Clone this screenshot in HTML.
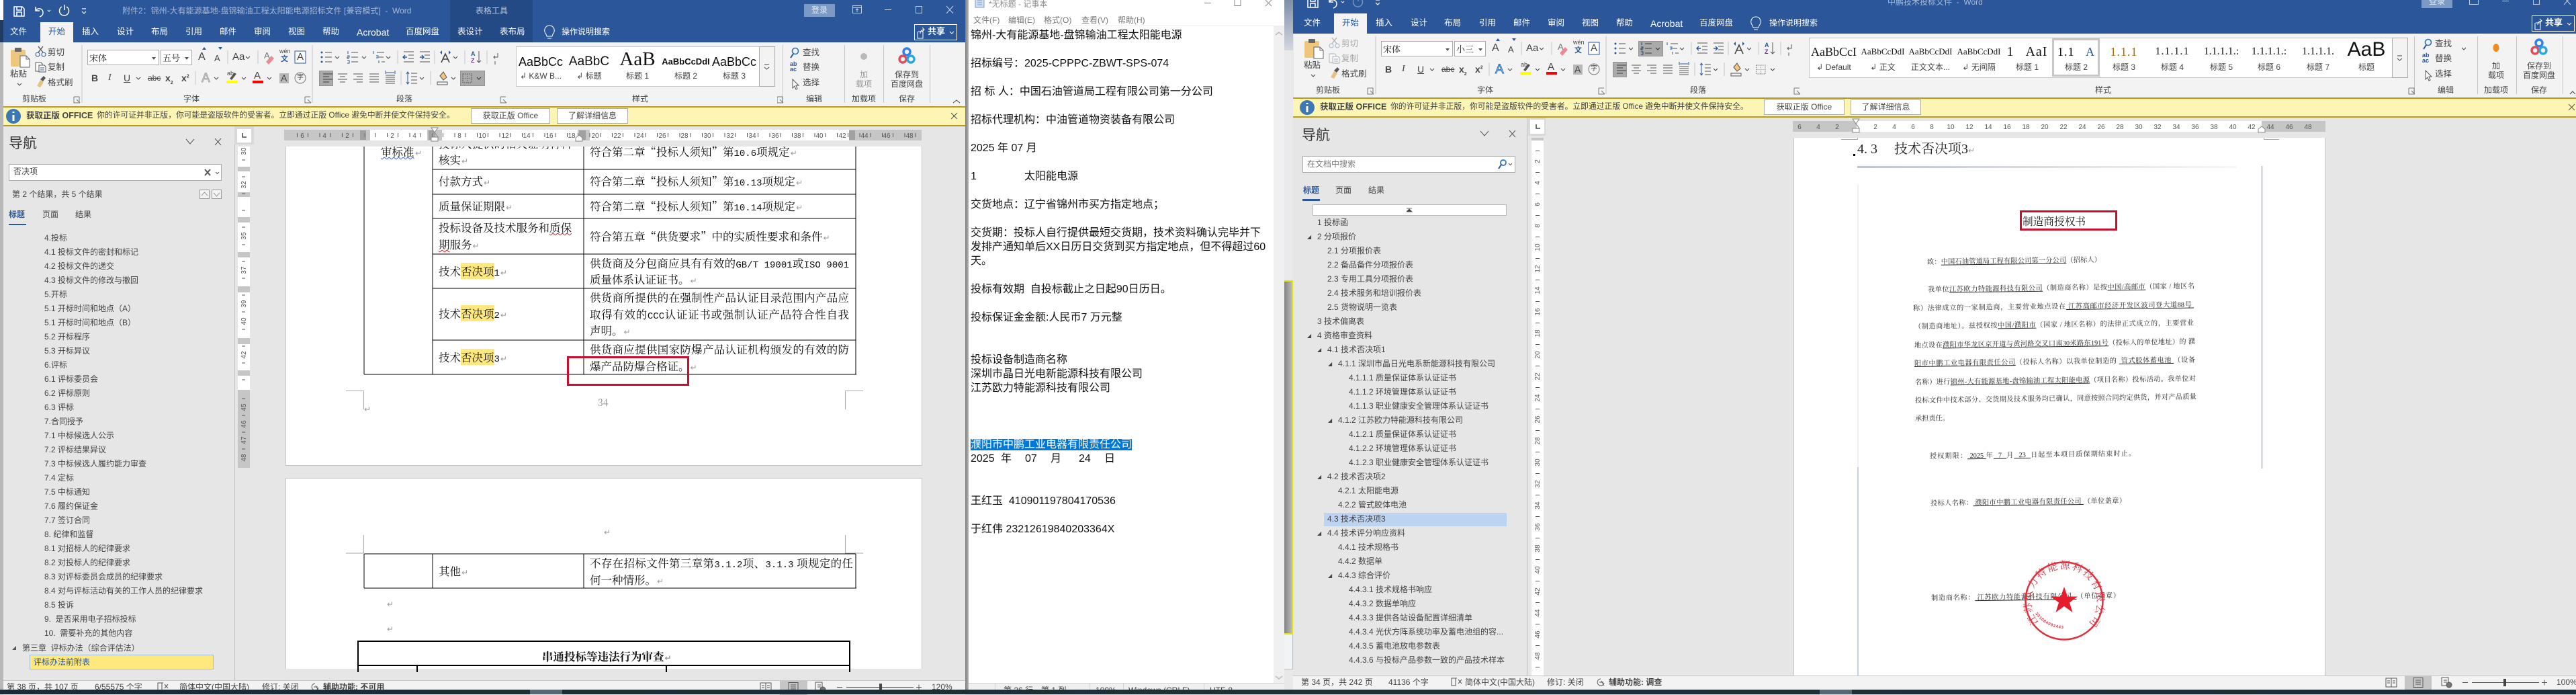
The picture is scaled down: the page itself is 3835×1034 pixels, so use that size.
<!DOCTYPE html>
<html lang="zh"><head><meta charset="utf-8"><title>Word</title>
<style>
html,body{margin:0;padding:0}
body{width:3835px;height:1033px;overflow:hidden;position:relative;background:#e6e6e6;font-family:"Liberation Sans","Noto Sans CJK SC",sans-serif}
.a{position:absolute}
.t{position:absolute;white-space:nowrap;line-height:1;font-size:12px;color:#444}
.w{position:absolute;overflow:hidden;background:#e6e6e6}
.tb{color:#fff;font-size:12.5px;top:41px}
.tit{color:#a4b9d8;font-size:12px;top:10px}
.lb{color:#444;top:141px}
.btn{position:absolute;background:#fff;border:1px solid #ababab;box-sizing:border-box;font-size:12px;color:#444;text-align:center;line-height:20px}
.ibar{position:absolute;background:#fcf5b4;border-top:2px solid #b99a1a;border-bottom:2px solid #b99a1a;box-sizing:border-box;height:30px}
.sty{position:absolute;top:0;text-align:center;white-space:nowrap;transform:translateX(-50%);line-height:1}
.n{position:absolute;font-size:12px;color:#444;line-height:21px;white-space:nowrap}
.n div{height:21px;position:relative}
.n s{position:absolute;margin-left:-15px;font-size:8px;text-decoration:none;color:#444;font-family:"DejaVu Sans",sans-serif}
.d{position:absolute;white-space:nowrap;font-family:"Noto Serif CJK SC","Liberation Serif",serif;font-size:16.5px;line-height:20px;height:20px;color:#111}
.j{text-align:justify;text-align-last:justify;white-space:normal;width:386px}
.d i{font-style:normal;color:#9a9a9a;font-family:"DejaVu Sans",sans-serif;font-size:12px;margin-left:1px}
.d b{font-family:"Liberation Mono",monospace;font-size:14px;font-weight:400}
.h{background:#ffe97f}
.sc{position:absolute;white-space:normal;overflow:hidden;font-family:"Liberation Serif","Noto Serif CJK SC",serif;font-size:10.2px;line-height:14px;height:14px;color:#222;transform:rotate(-.75deg);transform-origin:left center;text-align:justify;text-align-last:justify;filter:blur(.25px)}
.sc u{text-decoration-thickness:1px;text-underline-offset:1px}
svg{position:absolute;display:block}
svg text{font-family:"Liberation Sans","Noto Sans CJK SC",sans-serif}
</style></head>
<body>

<svg width="0" height="0" style="left:0;top:0"><defs>
<g id="ri" fill="none" stroke="#555" stroke-width="1">
 <rect x="16" y="74" width="22" height="25" rx="2" fill="#eec77f" stroke="none"/>
 <rect x="22" y="71" width="10" height="6" rx="1" fill="#666" stroke="none"/>
 <path d="M30 83h9l5 5v12H30z" fill="#fff" stroke="#666"/><path d="M39 83v5h5" stroke="#666"/>
 <path d="M55 128l5-9 5 3-5 8z" fill="#e8c27a" stroke="none"/><path d="M60 118l5-5 3 3-4 5z" fill="#555" stroke="none"/>
 <path d="M26 124l3 3 3-3M366 84l3 3 3-3M499 84l3 3 3-3M539 84l3 3 3-3M575 84l3 3 3-3M675 84l3 3 3-3M203 115l3 3 3-3M360 115l3 3 3-3M398 115l3 3 3-3M625 115l3 3 3-3M672 115l3 3 3-3M710 115l3 3 3-3M319 115l3 3 3-3" stroke="#444"/>
 <path d="M226 84h6l-3 4zM275 84h6l-3 4z" fill="#555" stroke="none"/>
 <path d="M110 144h8v8M110 144v9h9M114 148l5 5M454 144h8M454 144v9h9M458 148l5 5M745 144h8M745 144v9h9M749 148l5 5" stroke="#777"/>
 <path d="M122 67v86M465 67v86M339 75v20M384 75v20M291 106v20M592 75v20M647 75v20M692 75v20M725 75v20M597 106v20M641 106v20" stroke="#c6c6c6"/>
 <path d="M301 74l3-4 3 4zM325 70l3 4 3-4z" fill="#2b579a" stroke="none"/>
 <path d="M396 92l8-9 4 4-8 9z" fill="#e98b96" stroke="none"/>
 <rect x="439" y="76" width="16" height="18" stroke="#2b579a" fill="#fff"/>
 <rect x="337" y="120" width="16" height="4" fill="#ff0" stroke="none"/>
 <path d="M342 117l7-9 3 2-7 9z" fill="#555" stroke="none"/>
 <rect x="376" y="120" width="16" height="4" fill="#f00" stroke="none"/>
 <rect x="416" y="109" width="14" height="15" fill="#b8b8b8" stroke="none"/>
 <circle cx="447" cy="116" r="8" stroke="#777"/>
 <circle cx="479" cy="78" r="1.5" fill="#2b579a" stroke="none"/><circle cx="479" cy="85" r="1.5" fill="#2b579a" stroke="none"/><circle cx="479" cy="92" r="1.5" fill="#2b579a" stroke="none"/>
 <path d="M484 78h10M484 85h10M484 92h10M523 78h10M523 85h10M523 92h10M561 78h11M564 85h7M568 92h5"/>
 <path d="M518 76v4M517 83h3v2h-3v2h3M517 90h3v4h-3M556 76v4M560 83h3v3h-3M564 90v4" stroke="#2b579a"/>
 <path d="M601 77h15M608 82h8M608 87h8M601 92h15M625 77h15M632 82h8M632 87h8M625 92h15"/>
 <path d="M606 85h-6m3-3-3 3 3 3M625 85h6m-3-3 3 3-3 3" stroke="#2b579a" stroke-width="1.4"/>
 <path d="M657 93l6-13 6 13M659 88h8" stroke="#444" stroke-width="1.6"/>
 <path d="M655 78l3-3v6zM671 78l-3-3v6z" fill="#2b579a" stroke="none"/>
 <path d="M713 76v17m-3-3 3 3 3-3"/>
 <path d="M741 79v6h-6m2-2-2 2 2 2M737 91v5"/>
 <path d="M481 110h14M481 114h9M481 118h14M481 122h9M503 110h14M506 114h8M503 118h14M506 122h8M526 110h14M531 114h9M526 118h14M531 122h9M550 110h14M550 114h14M550 118h14M550 122h14M574 112h14M574 115h14M574 118h14M574 121h14M574 124h14"/>
 <path d="M574 105v5M588 105v5M575 108h12" stroke="#2b579a"/>
 <path d="M612 109h9M612 114h9M612 119h9M612 124h9"/>
 <path d="M607 107v18m-2-15 2-3 2 3m-4 12 2 3 2-3" stroke="#2b579a"/>
 <path d="M651 122h15v4h-15z"/><path d="M655 113l5-6 5 8-5 4z" fill="#f5c27d"/>
 <rect x="689" y="110" width="13" height="13" stroke="#666" stroke-dasharray="1.5"/>
 <path d="M689 116.500h13M695.500 110v13" stroke="#999" stroke-dasharray="1.500"/>
</g>
<g id="cutcopy" fill="none" stroke="#555">
 <circle cx="56" cy="81" r="3" stroke="#2b579a"/><circle cx="65" cy="81" r="3" stroke="#2b579a"/>
 <path d="M57 78l7-9M64 78l-7-9" stroke-width="1.4"/>
 <path d="M53 93h8l2 2v11H53z" fill="#fff"/><path d="M58 97h8l2 2v8H58z" fill="#fff"/><path d="M60 101h6M60 104h6" stroke="#2b579a"/>
</g>
<g id="qat" fill="none" stroke="#fff" stroke-width="1.500">
 <path d="M21 10h12l3 3v11H21z"/><path d="M25 10v5h7v-5M25 24v-6h7v6" fill="none"/>
 <path d="M53 10v6h6M53 16c3-5 11-4 11 3 0 3-2 5-5 6"/><path d="M71 15l2 2 2-2" stroke-width="1"/>
 <path d="M122 13h6M122 17l3 3 3-3" stroke-width="1.2"/>
</g>
<g id="redo" fill="none" stroke="#fff" stroke-width="1.500"><path d="M92 10a7 7 0 1 0 7 0M96 7v8"/></g>
<g id="edit" fill="none">
 <circle cx="8" cy="5" r="4.500" stroke="#2b72b9" stroke-width="1.600"/><path d="M5 9l-4 6" stroke="#2b579a" stroke-width="2"/>
 <path d="M4 47v13l3-3 2 5 2-1-2-5h4z" stroke="#555" fill="#fff"/>
</g>
<g id="baidu" fill="none" stroke-width="3.400">
 <circle cx="0" cy="-7" r="5" stroke="#2f7ff0"/><circle cx="-6" cy="4" r="5" stroke="#e14b5a"/><circle cx="6" cy="4" r="5" stroke="#28a8e0"/>
</g>
</defs></svg>

<!-- left strip -->
<div class="a" style="left:0;top:0;width:5px;height:30px;background:#fff"></div>
<div class="a" style="left:0;top:30px;width:5px;height:33px;background:#1f3a63"></div>
<div class="a" style="left:0;top:63px;width:5px;height:970px;background:#b8b8b8"></div>

<!-- ============ WORD 1 ============ -->
<div class="w" style="left:5px;top:0;width:1432px;height:1034px">
<div class="a" style="left:-5px;top:0;width:1437px;height:1034px">
 <div class="a" style="left:5px;top:0;width:1432px;height:63px;background:#2b579a"></div>
 <div class="a" style="left:5px;top:63px;width:1432px;height:95px;background:#f3f3f3"></div>
 <div class="a" style="left:670px;top:0;width:123px;height:63px;background:#234a84"></div>
 <svg width="1437" height="160" style="left:0;top:0"><use href="#qat"/><use href="#redo"/><use href="#ri"/><use href="#cutcopy"/></svg>
 <span class="t tit" style="left:182px">附件2：锦州-大有能源基地-盘锦输油工程太阳能电源招标文件 [兼容模式]&nbsp; -&nbsp; Word</span>
 <span class="t" style="left:708px;top:10px;color:#b9c9e0">表格工具</span>
 <div class="a" style="left:1197px;top:6px;width:46px;height:19px;background:#7b9ac6;color:#e3ebf6;font-size:12px;text-align:center;line-height:19px">登录</div>
 <svg width="180" height="30" style="left:1262px;top:0" fill="none" stroke="#c3d1e6">
  <rect x="7.500" y="8.500" width="13" height="11"/><path d="M7 11.500h13M14 18v-5m-2 2 2-2 2 2"/><path d="M55 14.500h10M101.500 9.500h9v10h-9zM147 9l10 11M157 9l-10 11"/>
 </svg>
 <div class="a" style="left:60px;top:33px;width:49px;height:30px;background:#f3f3f3"></div>
 <span class="t tb" style="left:15px">文件</span>
 <span class="t tb" style="left:72px;color:#2b579a">开始</span>
 <span class="t tb" style="left:122px">插入</span><span class="t tb" style="left:174px">设计</span><span class="t tb" style="left:225px">布局</span><span class="t tb" style="left:276px">引用</span><span class="t tb" style="left:327px">邮件</span><span class="t tb" style="left:378px">审阅</span><span class="t tb" style="left:429px">视图</span><span class="t tb" style="left:480px">帮助</span><span class="t tb" style="left:531px;font-size:14px">Acrobat</span><span class="t tb" style="left:604px">百度网盘</span><span class="t tb" style="left:681px">表设计</span><span class="t tb" style="left:744px">表布局</span>
 <svg width="20" height="24" style="left:808px;top:36px" fill="none" stroke="#fff"><path d="M5 15c-5-6-1-13 5-13s10 7 5 13l-1 3H6zM7 21h6"/></svg>
 <span class="t tb" style="left:836px;font-size:12px;top:41px">操作说明搜索</span>
 <div class="a" style="left:1361px;top:36px;width:64px;height:24px;border:1px solid #fff;box-sizing:border-box"></div>
 <svg width="18" height="20" style="left:1364px;top:40px" fill="none" stroke="#fff"><path d="M3 7h7v10H2V7M6 10c0-4 3-6 6-6M9 1l3 3-3 3"/></svg>
 <span class="t tb" style="left:1381px;top:40px;font-weight:700;font-size:13px">共享</span>
 <svg width="10" height="6" style="left:1413px;top:46px" fill="none" stroke="#fff"><path d="M1 1l3 3 3-3"/></svg>
 <!-- ribbon -->
 <span class="t" style="left:15px;top:104px;font-size:12.500px">粘贴</span>
 <span class="t" style="left:71px;top:72px;font-size:12.500px">剪切</span><span class="t" style="left:71px;top:94px;font-size:12.500px">复制</span><span class="t" style="left:71px;top:117px;font-size:12.500px">格式刷</span>
 <span class="t lb" style="left:33px">剪贴板</span><span class="t lb" style="left:273px">字体</span><span class="t lb" style="left:590px">段落</span>
 <div class="btn" style="left:130px;top:74px;width:107px;height:23px;z-index:0"></div><div class="btn" style="left:239px;top:74px;width:47px;height:23px"></div>
 <svg width="160" height="10" style="left:130px;top:80px"><path d="M96 5h6l-3 4zM145 5h6l-3 4z" fill="#555"/></svg>
 <span class="t" style="left:133px;top:79px;font-size:13px;font-family:'Noto Serif CJK SC',serif;color:#222">宋体</span><span class="t" style="left:242px;top:79px;font-size:13px;color:#222;font-family:'Noto Serif CJK SC',serif">五号</span>
 <span class="t" style="left:295px;top:77px;font-size:16px">A</span><span class="t" style="left:319px;top:80px;font-size:13px">A</span><span class="t" style="left:346px;top:77px;font-size:15px">Aa</span>
 <span class="t" style="left:393px;top:76px;font-size:13px;color:#777">A</span><span class="t" style="left:416px;top:72px;font-size:9px">wén</span><span class="t" style="left:418px;top:83px;font-size:11px;color:#2b579a;font-weight:700">文</span><span class="t" style="left:442px;top:77px;font-size:15px">A</span>
 <span class="t" style="left:136px;top:109px;font-size:14px;font-weight:700">B</span><span class="t" style="left:161px;top:109px;font-size:14px;font-style:italic;font-family:'Liberation Serif'">I</span><span class="t" style="left:184px;top:109px;font-size:14px;text-decoration:underline">U</span><span class="t" style="left:220px;top:110px;font-size:12px;text-decoration:line-through">abc</span><span class="t" style="left:246px;top:109px;font-size:14px;font-weight:700">x<sub style="font-size:7px">2</sub></span><span class="t" style="left:270px;top:109px;font-size:14px;font-weight:700">x<sup style="font-size:7px">2</sup></span>
 <span class="t" style="left:300px;top:107px;font-size:19px;color:#ccc;-webkit-text-stroke:1px #aaa">A</span><span class="t" style="left:338px;top:105px;font-size:9px">ab</span><span class="t" style="left:378px;top:105px;font-size:15px">A</span><span class="t" style="left:418px;top:109px;font-size:14px">A</span><span class="t" style="left:442px;top:111px;font-size:10px">字</span>
 <span class="t" style="left:701px;top:76px;font-size:9px;color:#2b579a;font-weight:700">A</span><span class="t" style="left:701px;top:86px;font-size:9px;color:#7030a0;font-weight:700">Z</span>
 <div class="a" style="left:475px;top:105px;width:21px;height:23px;background:#b3b3b3;border:1px solid #999;box-sizing:border-box;mix-blend-mode:multiply"></div>
 <div class="a" style="left:685px;top:105px;width:37px;height:23px;background:#b3b3b3;border:1px solid #999;box-sizing:border-box;mix-blend-mode:multiply"></div>
 <!-- gallery -->
 <div class="a" style="left:768px;top:69px;width:386px;height:60px;background:#fff;border:1px solid #c6c6c6;box-sizing:border-box"></div>
 <div class="a" style="left:1130px;top:69px;width:24px;height:60px;background:#f3f3f3;border:1px solid #aaa;box-sizing:border-box"></div>
 <svg width="12" height="10" style="left:1136px;top:95px" fill="none" stroke="#444"><path d="M2 1h7M2 5l3.500 3L9 5"/></svg>
 <div class="a" style="left:0;top:78px;font-family:'Liberation Sans',sans-serif;color:#111">
  <span class="sty" style="left:805px;top:5px;font-size:18px">AaBbCc</span><span class="sty" style="left:877px;top:4px;font-size:19px">AaBbC</span><span class="sty" style="left:949px;top:-4px;font-size:29px;font-family:'Liberation Serif'">AaB</span><span class="sty" style="left:1021px;top:7px;font-size:13px;font-weight:700">AaBbCcDdI</span><span class="sty" style="left:1093px;top:5px;font-size:18px">AaBbCc</span>
  <span class="sty" style="left:805px;top:29px;font-size:12px;color:#444;font-family:'Liberation Sans','Noto Sans CJK SC'">↲ K&amp;W B...</span><span class="sty" style="left:877px;top:29px;font-size:12px;color:#444;font-family:'Liberation Sans','Noto Sans CJK SC'">↲ 标题</span><span class="sty" style="left:949px;top:29px;font-size:12px;color:#444;font-family:'Liberation Sans','Noto Sans CJK SC'">标题 1</span><span class="sty" style="left:1021px;top:29px;font-size:12px;color:#444;font-family:'Liberation Sans','Noto Sans CJK SC'">标题 2</span><span class="sty" style="left:1093px;top:29px;font-size:12px;color:#444;font-family:'Liberation Sans','Noto Sans CJK SC'">标题 3</span>
 </div>
 <span class="t lb" style="left:941px">样式</span>
 <svg width="280" height="100" style="left:1157px;top:60px" fill="none" stroke="#c6c6c6">
  <path d="M8.500 7v86M100.500 7v86M158.500 7v86M227.500 7v86"/><path d="M0 84h8v8M0 84v9h9M4 88l5 5" stroke="#777"/>
  <path d="M262 93l5-4 5 4" stroke="#444"/><circle cx="129" cy="24" r="5" fill="#b9b9b9" stroke="none"/>
  <g transform="translate(19 11)"><use href="#edit"/></g><g transform="translate(193 24)"><use href="#baidu"/></g>
 </svg>
 <span class="t" style="left:1195px;top:72px;font-size:12.500px">查找</span><span class="t" style="left:1195px;top:94px;font-size:12.500px">替换</span><span class="t" style="left:1195px;top:117px;font-size:12.500px">选择</span>
 <span class="t" style="left:1176px;top:91px;font-size:9px;color:#2b579a;line-height:8px;white-space:normal;width:12px;font-weight:700">ab<br>ac</span>
 <span class="t lb" style="left:1200px">编辑</span><span class="t" style="left:1280px;top:105px;color:#999">加</span><span class="t" style="left:1274px;top:119px;color:#999">载项</span><span class="t lb" style="left:1268px">加载项</span>
 <span class="t" style="left:1332px;top:105px">保存到</span><span class="t" style="left:1326px;top:119px">百度网盘</span><span class="t lb" style="left:1338px">保存</span>
 <!-- info bar -->
 <div class="ibar" style="left:5px;top:158px;width:1432px"></div>
 <svg width="24" height="24" style="left:8px;top:161px"><circle cx="12" cy="12" r="11" fill="#3d78b5"/><path d="M12 5v2M12 10v9" stroke="#fff" stroke-width="3"/></svg>
 <span class="t" style="left:39px;top:166px;font-weight:700;font-size:12.500px;color:#444">获取正版 OFFICE</span>
 <span class="t" style="left:144px;top:166px;font-size:11.800px">你的许可证并非正版，你可能是盗版软件的受害者。立即通过正版 Office 避免中断并使文件保持安全。</span>
 <div class="btn" style="left:701px;top:161px;width:118px;height:23px">获取正版 Office</div><div class="btn" style="left:829px;top:161px;width:106px;height:23px">了解详细信息</div>
 <svg width="14" height="14" style="left:1414px;top:166px" fill="none" stroke="#555"><path d="M2 2l9 9M11 2l-9 9"/></svg>
 <!-- nav -->
 <div class="a" style="left:349px;top:188px;width:1px;height:824px;background:#bdbdbd"></div>
 <span class="t" style="left:13px;top:203px;font-size:21px;color:#333">导航</span>
 <svg width="60" height="14" style="left:276px;top:204px" fill="none" stroke="#555"><path d="M1 3l6 7 6-7M44 2l9 10M53 2l-9 10"/></svg>
 <div class="btn" style="left:13px;top:244px;width:317px;height:25px"></div>
 <span class="t" style="left:20px;top:249px;font-size:12px">否决项</span>
 <svg width="30" height="14" style="left:303px;top:250px" fill="none" stroke="#555"><path d="M2 2l8 9M10 2l-8 9" stroke-width="2"/><path d="M18 6l2.500 2.500L23 6"/></svg>
 <span class="t" style="left:18px;top:283px;font-size:12px">第 2 个结果，共 5 个结果</span>
 <svg width="34" height="15" style="left:297px;top:282px" fill="#f3f3f3" stroke="#999"><rect x=".5" y=".5" width="14" height="13"/><rect x="18.500" y=".5" width="14" height="13"/><path d="M3 9l4.500-5L12 9M21 5l4.500 5L30 5" fill="none"/></svg>
 <span class="t" style="left:13px;top:313px;font-weight:700;color:#2b579a">标题</span><span class="t" style="left:63px;top:313px">页面</span><span class="t" style="left:112px;top:313px">结果</span>
 <div class="a" style="left:13px;top:333px;width:26px;height:2px;background:#2b579a"></div>
 <div class="n" style="left:66px;top:344px">
  <div>4.投标</div><div>4.1 投标文件的密封和标记</div><div>4.2 投标文件的递交</div><div>4.3 投标文件的修改与撤回</div><div>5.开标</div><div>5.1 开标时间和地点（A）</div><div>5.1 开标时间和地点（B）</div><div>5.2 开标程序</div><div>5.3 开标异议</div><div>6.评标</div><div>6.1 评标委员会</div><div>6.2 评标原则</div><div>6.3 评标</div><div>7.合同授予</div><div>7.1 中标候选人公示</div><div>7.2 评标结果异议</div><div>7.3 中标候选人履约能力审查</div><div>7.4 定标</div><div>7.5 中标通知</div><div>7.6 履约保证金</div><div>7.7 签订合同</div><div>8. 纪律和监督</div><div>8.1 对招标人的纪律要求</div><div>8.2 对投标人的纪律要求</div><div>8.3 对评标委员会成员的纪律要求</div><div>8.4 对与评标活动有关的工作人员的纪律要求</div><div>8.5 投诉</div><div>9.&nbsp; 是否采用电子招标投标</div><div>10.&nbsp; 需要补充的其他内容</div>
 </div>
 <svg width="8" height="8" style="left:17px;top:960px"><path d="M7 1v6H1z" fill="#555"/></svg>
 <span class="t" style="left:33px;top:958px">第三章&nbsp; 评标办法（综合评估法）</span>
 <div class="a" style="left:44px;top:974px;width:274px;height:22px;background:#ffe97f;border:1px solid #a3bde3;box-sizing:border-box"></div>
 <span class="t" style="left:50px;top:979px;color:#2b579a">评标办法前附表</span>
 <!-- h ruler -->
 <div class="a" style="left:354px;top:188px;width:1083px;height:30px;background:#e6e6e6"></div>
 <div class="a" style="left:349px;top:188px;width:29px;height:27px;background:#d9d9d9"></div><div class="a" style="left:353px;top:192px;width:21px;height:20px;background:#fff"></div>
 <svg width="8" height="8" style="left:360px;top:198px" fill="none" stroke="#444" stroke-width="1.500"><path d="M1 0v6h6"/></svg>
 <div class="a" style="left:423px;top:193px;width:949px;height:16px;background:#c6c6c6"></div>
 <div class="a" style="left:551px;top:193px;width:85px;height:16px;background:#fff"></div>
 <div class="a" style="left:658px;top:193px;width:202px;height:16px;background:#fff"></div>
 <div class="a" style="left:878px;top:193px;width:386px;height:16px;background:#fff"></div>
 <div class="a" style="left:442px;top:198px;width:925px;height:6px;background:repeating-linear-gradient(90deg,#555 0 1px,transparent 1px 16px,#555 16px 17px,transparent 17px 33.500px)"></div>
 <svg width="1000" height="30" style="left:420px;top:188px" font-size="10" fill="#555" text-anchor="middle">
  <text x="30" y="17">6</text><text x="63" y="17">4</text><text x="97" y="17">2</text><text x="164" y="17">2</text><text x="197" y="17">4</text><text x="264" y="17">8</text><text x="298" y="17">10</text><text x="332" y="17">12</text><text x="364" y="17">14</text><text x="398" y="17">16</text><text x="431" y="17">18</text><text x="466" y="17">20</text><text x="499" y="17">22</text><text x="533" y="17">24</text><text x="566" y="17">26</text><text x="599" y="17">28</text><text x="633" y="17">30</text><text x="667" y="17">32</text><text x="700" y="17">34</text><text x="734" y="17">36</text><text x="767" y="17">38</text><text x="800" y="17">40</text><text x="834" y="17">42</text><text x="867" y="17">44</text><text x="900" y="17">46</text><text x="934" y="17">48</text>
  <rect x="116" y="6" width="9" height="14" fill="#888" opacity=".6"/><rect x="218" y="6" width="10" height="14" fill="#888" opacity=".6"/><rect x="442" y="6" width="10" height="14" fill="#888" opacity=".6"/><rect x="844" y="6" width="9" height="14" fill="#888" opacity=".6"/>
  <path d="M222 2h10l-5 7 5 7v6h-10v-6h10l-5-7-5-7z" fill="#fff" stroke="#888"/><path d="M437 22v-5l5-4 5 4v5z" fill="#fff" stroke="#888"/>
 </svg>
 <!-- v ruler -->
 <div class="a" style="left:354px;top:218px;width:18px;height:478px;background:#c6c6c6"></div>
 <div class="a" style="left:354px;top:218px;width:18px;height:30px;background:#fff"></div><div class="a" style="left:354px;top:255px;width:18px;height:31px;background:#fff"></div><div class="a" style="left:354px;top:293px;width:18px;height:30px;background:#fff"></div><div class="a" style="left:354px;top:331px;width:18px;height:44px;background:#fff"></div><div class="a" style="left:354px;top:383px;width:18px;height:43px;background:#fff"></div><div class="a" style="left:354px;top:435px;width:18px;height:68px;background:#fff"></div><div class="a" style="left:354px;top:512px;width:18px;height:39px;background:#fff"></div><div class="a" style="left:354px;top:559px;width:18px;height:21px;background:#fff"></div>
 <svg width="20" height="480" style="left:354px;top:218px" font-size="10" fill="#555" text-anchor="middle">
  <text transform="translate(12 7)rotate(-90)">30</text><text transform="translate(12 57)rotate(-90)">32</text><text transform="translate(12 133)rotate(-90)">35</text><text transform="translate(12 184)rotate(-90)">37</text><text transform="translate(12 234)rotate(-90)">39</text><text transform="translate(12 260)rotate(-90)">40</text><text transform="translate(12 310)rotate(-90)">42</text><text transform="translate(12 388)rotate(-90)">45</text><text transform="translate(12 413)rotate(-90)">46</text><text transform="translate(12 437)rotate(-90)">47</text><text transform="translate(12 463)rotate(-90)">48</text>
  <path d="M6 20h5M6 45h5M6 70h5M6 95h5M6 120h5M6 146h5M6 171h5M6 196h5M6 221h5M6 246h5M6 272h5M6 297h5M6 322h5M6 347h5M6 375h5M6 400h5M6 425h5M6 450h5" stroke="#555"/>
 </svg>
 <!-- document -->
 <div class="a" style="left:350px;top:218px;width:1087px;height:794px;overflow:hidden">
 <div class="a" style="left:-350px;top:-218px;width:1437px;height:1034px">
  <div class="a" style="left:425px;top:100px;width:948px;height:593px;background:#fff;border:1px solid #c6c6c6;box-sizing:border-box"></div>
  <div class="a" style="left:425px;top:711px;width:948px;height:284px;background:#fff;border:1px solid #c6c6c6;border-bottom:0;box-sizing:border-box"></div>
  <svg width="1437" height="1000" style="left:0;top:0" fill="none" stroke="#000" shape-rendering="crispEdges">
   <path d="M542 200V557M644 200V557M869 200V557M1274 200V557M644 252H1274M644 289H1274M644 325H1274M644 378H1274M644 429H1274M644 506H1274M542 557H1275"/>
   <path d="M542 824V875M644 824V875M869 824V875M1274 824V875M542 824H1274M542 875H1275"/>
   <path d="M533 954H1265M533 953V1000M1265 953V1000M533 990H1265M621 990v10M992 990v10" stroke-width="2"/>
   <path d="M515 581.500H541.500V609M1285 581.500H1258.500V609M541.500 796V823H515M1258.500 796V823H1285" stroke="#aaa"/>
  </svg>
  <span class="d" style="left:567px;top:215px;text-decoration:underline wavy #3a62d0 1px">审标准</span><span class="d" style="left:617px;top:215px"><i>↵</i></span>
  <span class="d" style="left:653px;top:203px">投标人提供的相关证明材料</span>
  <span class="d" style="left:653px;top:227px">核实<i>↵</i></span>
  <span class="d" style="left:878px;top:215px">符合第二章“投标人须知”第<b>10.6</b>项规定<i>↵</i></span>
  <span class="d" style="left:653px;top:259px">付款方式<i>↵</i></span><span class="d" style="left:878px;top:259px">符合第二章“投标人须知”第<b>10.13</b>项规定<i>↵</i></span>
  <span class="d" style="left:653px;top:296px">质量保证期限<i>↵</i></span><span class="d" style="left:878px;top:296px">符合第二章“投标人须知”第<b>10.14</b>项规定<i>↵</i></span>
  <span class="d" style="left:653px;top:328px">投标设备及技术服务和<span style="text-decoration:underline wavy #d22 1px">质保</span></span>
  <span class="d" style="left:653px;top:353px"><span style="text-decoration:underline wavy #d22 1px">期</span>服务<i>↵</i></span>
  <span class="d" style="left:878px;top:341px">符合第五章“供货要求”中的实质性要求和条件<i>↵</i></span>
  <span class="d" style="left:653px;top:393px">技术<span class="h">否决项</span><b>1</b><i>↵</i></span>
  <span class="d j" style="left:878px;top:381px">供货商及分包商应具有有效的<b>GB/T 19001</b>或<b>ISO 9001</b></span>
  <span class="d" style="left:878px;top:405px">质量体系认证证书。<i>↵</i></span>
  <span class="d" style="left:653px;top:456px">技术<span class="h">否决项</span><b>2</b><i>↵</i></span>
  <span class="d j" style="left:878px;top:432px">供货商所提供的在强制性产品认证目录范围内产品应</span>
  <span class="d j" style="left:878px;top:457px">取得有效的<b>CCC</b>认证证书或强制认证产品符合性自我</span>
  <span class="d" style="left:878px;top:481px">声明。<i>↵</i></span>
  <span class="d" style="left:653px;top:521px">技术<span class="h">否决项</span><b>3</b><i>↵</i></span>
  <span class="d j" style="left:878px;top:509px">供货商应提供国家防爆产品认证机构颁发的有效的防</span>
  <span class="d" style="left:878px;top:534px">爆产品防爆合格证。<i>↵</i></span>
  <div class="a" style="left:844px;top:530px;width:182px;height:44px;border:3.500px solid #c8102e;box-sizing:border-box"></div>
  <span class="d" style="left:541px;top:596px"><i style="font-size:12px">↵</i></span>
  <span class="d" style="left:890px;top:589px;color:#888;font-size:14px">34</span>
  <span class="d" style="left:898px;top:779px"><i>↵</i></span>
  <span class="d" style="left:653px;top:839px">其他<i>↵</i></span>
  <span class="d j" style="left:878px;top:827px;width:392px">不存在招标文件第三章第<b>3.1.2</b>项、<b>3.1.3</b> 项规定的任</span>
  <span class="d" style="left:878px;top:852px">何一种情形。<i>↵</i></span>
  <span class="d" style="left:575px;top:886px"><i>↵</i></span><span class="d" style="left:575px;top:923px"><i>↵</i></span>
  <span class="d" style="left:807px;top:966px;font-weight:700">串通投标等违法行为审查<i>↵</i></span>
 </div></div>
 <!-- status -->
 <div class="a" style="left:5px;top:1012px;width:1432px;height:22px;background:#f3f3f3;border-top:1px solid #c6c6c6;box-sizing:border-box"></div>
 <span class="t" style="left:10px;top:1016px">第 38 页，共 107 页</span><span class="t" style="left:141px;top:1016px">6/55575 个字</span><span class="t" style="left:267px;top:1016px">简体中文(中国大陆)</span><span class="t" style="left:390px;top:1016px">修订: 关闭</span><span class="t" style="left:481px;top:1016px;font-weight:700">辅助功能: 不可用</span>
 <svg width="20" height="14" style="left:233px;top:1015px" fill="none" stroke="#555"><path d="M2 1h6v11H2zM8 1h2M12 3l5 6M17 3l-5 6"/></svg>
 <svg width="16" height="14" style="left:462px;top:1015px" fill="none" stroke="#555"><path d="M7 2a5 5 0 1 0 5 6M8 5l4 7M5 7h6"/></svg>
 <div class="a" style="left:1161px;top:1013px;width:41px;height:21px;background:#c6c6c6"></div>
 <svg width="270" height="22" style="left:1130px;top:1012px" fill="none" stroke="#555">
  <path d="M2 4h8v13H2zM10 4h8v13h-8zM4 8h4M4 11h4M12 8h4M12 11h4"/><path d="M44 3.500h14v14H44zM47 7h8M47 10h8M47 13h8"/><path d="M84 3h10v12H84zM87 7h5M87 10h5"/><circle cx="95" cy="14" r="4" fill="#777"/>
  <path d="M116 10.500h8M130 10.500h100M234 10.500h8M238 6.500v8"/><rect x="179" y="5" width="4" height="11" fill="#444" stroke="none"/>
 </svg>
 <span class="t" style="left:1387px;top:1016px;font-size:12px">120%</span>
</div></div>

<!-- behind strip -->
<div class="a" style="left:1912px;top:0;width:14px;height:1033px;background:#e8e8e8"></div>
<div class="a" style="left:1912px;top:0;width:14px;height:75px;background:linear-gradient(180deg,#7f8fa8,#d4d8de)"></div>
<div class="a" style="left:1912px;top:75px;width:14px;height:342px;background:#eaeaec;border-right:1px solid #c5c9d0;box-sizing:border-box"></div>
<div class="a" style="left:1912px;top:417px;width:13px;height:527px;background:linear-gradient(90deg,#838383,#b9b9b9);border:2px solid #e4e400;border-left:0;box-sizing:border-box"></div>
<div class="a" style="left:1912px;top:944px;width:13px;height:52px;background:#f2f3f5;border-right:1px solid #b8bcc4;border-bottom:1px solid #b8bcc4;box-sizing:border-box"></div>

<!-- ============ WORD 2 ============ -->
<div class="w" style="left:1925px;top:-13px;width:1910px;height:1039px">
<div class="a" style="left:1px;top:0;width:1909px;height:1039px">
 <div class="a" style="left:-1px;top:0;width:1910px;height:63px;background:#2b579a"></div>
 <div class="a" style="left:0;top:63px;width:1909px;height:95px;background:#f3f3f3"></div>
 <svg width="1909" height="160" style="left:0;top:0"><use href="#qat"/><g opacity=".35"><use href="#redo"/></g><use href="#ri"/><g opacity=".4"><use href="#cutcopy"/></g></svg>
 <span class="t tit" style="left:884px">中鹏技术投标文件&nbsp; -&nbsp; Word</span>
 <div class="a" style="left:1679px;top:6px;width:46px;height:19px;background:#7b9ac6;color:#e3ebf6;font-size:12px;text-align:center;line-height:19px">登录</div>
 <svg width="180" height="30" style="left:1750px;top:0" fill="none" stroke="#c3d1e6"><rect x=".5" y="8.500" width="13" height="11"/><path d="M49 14.500h10M95.500 9.500h9v10h-9zM141 9l10 11M151 9l-10 11"/></svg>
 <div class="a" style="left:60px;top:33px;width:49px;height:30px;background:#f3f3f3"></div>
 <span class="t tb" style="left:15px">文件</span><span class="t tb" style="left:72px;color:#2b579a">开始</span><span class="t tb" style="left:122px">插入</span><span class="t tb" style="left:174px">设计</span><span class="t tb" style="left:224px">布局</span><span class="t tb" style="left:276px">引用</span><span class="t tb" style="left:327px">邮件</span><span class="t tb" style="left:378px">审阅</span><span class="t tb" style="left:429px">视图</span><span class="t tb" style="left:480px">帮助</span><span class="t tb" style="left:531px;font-size:14px">Acrobat</span><span class="t tb" style="left:604px">百度网盘</span>
 <svg width="20" height="24" style="left:678px;top:36px" fill="none" stroke="#fff"><path d="M5 15c-5-6-1-13 5-13s10 7 5 13l-1 3H6zM7 21h6"/></svg>
 <span class="t tb" style="left:708px;font-size:12px">操作说明搜索</span>
 <div class="a" style="left:1843px;top:36px;width:64px;height:24px;border:1px solid #fff;box-sizing:border-box"></div>
 <svg width="18" height="20" style="left:1846px;top:40px" fill="none" stroke="#fff"><path d="M3 7h7v10H2V7M6 10c0-4 3-6 6-6M9 1l3 3-3 3"/></svg>
 <span class="t tb" style="left:1863px;top:40px;font-weight:700;font-size:13px">共享</span>
 <svg width="10" height="6" style="left:1895px;top:46px" fill="none" stroke="#fff"><path d="M1 1l3 3 3-3"/></svg>
 <span class="t" style="left:15px;top:104px;font-size:12.500px">粘贴</span>
 <span class="t" style="left:71px;top:72px;font-size:12.500px;color:#aaa">剪切</span><span class="t" style="left:71px;top:94px;font-size:12.500px;color:#aaa">复制</span><span class="t" style="left:71px;top:117px;font-size:12.500px">格式刷</span>
 <span class="t lb" style="left:33px">剪贴板</span><span class="t lb" style="left:273px">字体</span><span class="t lb" style="left:590px">段落</span>
 <div class="btn" style="left:130px;top:74px;width:107px;height:23px"></div><div class="btn" style="left:239px;top:74px;width:47px;height:23px"></div>
 <svg width="160" height="10" style="left:130px;top:80px"><path d="M96 5h6l-3 4zM145 5h6l-3 4z" fill="#555"/></svg>
 <span class="t" style="left:133px;top:79px;font-size:13px;font-family:'Noto Serif CJK SC',serif;color:#222">宋体</span><span class="t" style="left:242px;top:79px;font-size:13px;color:#222;font-family:'Noto Serif CJK SC',serif">小三</span>
 <span class="t" style="left:295px;top:77px;font-size:16px">A</span><span class="t" style="left:319px;top:80px;font-size:13px">A</span><span class="t" style="left:346px;top:77px;font-size:15px">Aa</span>
 <span class="t" style="left:393px;top:76px;font-size:13px;color:#777">A</span><span class="t" style="left:416px;top:72px;font-size:9px">wén</span><span class="t" style="left:418px;top:83px;font-size:11px;color:#2b579a;font-weight:700">文</span><span class="t" style="left:442px;top:77px;font-size:15px">A</span>
 <span class="t" style="left:136px;top:109px;font-size:14px;font-weight:700">B</span><span class="t" style="left:161px;top:109px;font-size:14px;font-style:italic;font-family:'Liberation Serif'">I</span><span class="t" style="left:184px;top:109px;font-size:14px;text-decoration:underline">U</span><span class="t" style="left:220px;top:110px;font-size:12px;text-decoration:line-through">abc</span><span class="t" style="left:246px;top:109px;font-size:14px;font-weight:700">x<sub style="font-size:7px">2</sub></span><span class="t" style="left:270px;top:109px;font-size:14px;font-weight:700">x<sup style="font-size:7px">2</sup></span>
 <span class="t" style="left:300px;top:107px;font-size:19px;color:#bcd4ee;-webkit-text-stroke:1px #2b72b9">A</span><span class="t" style="left:338px;top:105px;font-size:9px">ab</span><span class="t" style="left:378px;top:105px;font-size:15px">A</span><span class="t" style="left:418px;top:109px;font-size:14px">A</span><span class="t" style="left:442px;top:111px;font-size:10px">字</span>
 <span class="t" style="left:701px;top:76px;font-size:9px;color:#2b579a;font-weight:700">A</span><span class="t" style="left:701px;top:86px;font-size:9px;color:#7030a0;font-weight:700">Z</span>
 <div class="a" style="left:475px;top:105px;width:21px;height:23px;background:#b3b3b3;border:1px solid #999;box-sizing:border-box;mix-blend-mode:multiply"></div>
 <div class="a" style="left:513px;top:74px;width:37px;height:23px;background:#b3b3b3;border:1px solid #999;box-sizing:border-box;mix-blend-mode:multiply"></div>
 <!-- gallery -->
 <div class="a" style="left:767px;top:69px;width:892px;height:60px;background:#fff;border:1px solid #c6c6c6;box-sizing:border-box"></div>
 <div class="a" style="left:1129px;top:70px;width:71px;height:57px;background:#fff;border:3px solid #c6c6c6;box-sizing:border-box"></div>
 <div class="a" style="left:1635px;top:69px;width:24px;height:60px;background:#f3f3f3;border:1px solid #aaa;box-sizing:border-box"></div>
 <svg width="12" height="10" style="left:1641px;top:95px" fill="none" stroke="#444"><path d="M2 1h7M2 5l3.500 3L9 5"/></svg>
 <div class="a" style="left:0;top:78px;color:#111;font-family:'Liberation Serif',serif">
  <span class="sty" style="left:804px;top:3px;font-size:18px">AaBbCcI</span><span class="sty" style="left:877px;top:5px;font-size:13px">AaBbCcDdI</span><span class="sty" style="left:948px;top:5px;font-size:13px">AaBbCcDdI</span><span class="sty" style="left:1020px;top:5px;font-size:13px">AaBbCcDdI</span><span class="sty" style="left:1092px;top:2px;font-size:20px;letter-spacing:1px">1&nbsp;&nbsp; AaI</span><span class="sty" style="left:1165px;top:3px;font-size:18px;letter-spacing:1px">1.1&nbsp;&nbsp;&nbsp;<span style="color:#2b579a">A</span></span><span class="sty" style="left:1236px;top:3px;font-size:18px;letter-spacing:1px;color:#b36a00">1.1.1</span><span class="sty" style="left:1308px;top:4px;font-size:16px;letter-spacing:1px">1.1.1.1</span><span class="sty" style="left:1381px;top:4px;font-size:16px">1.1.1.1.:</span><span class="sty" style="left:1452px;top:4px;font-size:16px">1.1.1.1.:</span><span class="sty" style="left:1525px;top:4px;font-size:16px">1.1.1.1.</span><span class="sty" style="left:1597px;top:-6px;font-size:30px;font-family:'Liberation Sans'">AaB</span>
  <span class="sty" style="left:804px;top:29px;font-size:12px;color:#444;font-family:'Liberation Sans','Noto Sans CJK SC'">↲ Default</span><span class="sty" style="left:877px;top:29px;font-size:12px;color:#444;font-family:'Liberation Sans','Noto Sans CJK SC'">↲ 正文</span><span class="sty" style="left:948px;top:29px;font-size:12px;color:#444;font-family:'Liberation Sans','Noto Sans CJK SC'">正文文本...</span><span class="sty" style="left:1020px;top:29px;font-size:12px;color:#444;font-family:'Liberation Sans','Noto Sans CJK SC'">↲ 无间隔</span><span class="sty" style="left:1092px;top:29px;font-size:12px;color:#444;font-family:'Liberation Sans','Noto Sans CJK SC'">标题 1</span><span class="sty" style="left:1165px;top:29px;font-size:12px;color:#444;font-family:'Liberation Sans','Noto Sans CJK SC'">标题 2</span><span class="sty" style="left:1236px;top:29px;font-size:12px;color:#444;font-family:'Liberation Sans','Noto Sans CJK SC'">标题 3</span><span class="sty" style="left:1308px;top:29px;font-size:12px;color:#444;font-family:'Liberation Sans','Noto Sans CJK SC'">标题 4</span><span class="sty" style="left:1381px;top:29px;font-size:12px;color:#444;font-family:'Liberation Sans','Noto Sans CJK SC'">标题 5</span><span class="sty" style="left:1452px;top:29px;font-size:12px;color:#444;font-family:'Liberation Sans','Noto Sans CJK SC'">标题 6</span><span class="sty" style="left:1525px;top:29px;font-size:12px;color:#444;font-family:'Liberation Sans','Noto Sans CJK SC'">标题 7</span><span class="sty" style="left:1597px;top:29px;font-size:12px;color:#444;font-family:'Liberation Sans','Noto Sans CJK SC'">标题</span>
 </div>
 <span class="t lb" style="left:1193px">样式</span>
 <svg width="250" height="100" style="left:1659px;top:60px" fill="none" stroke="#c6c6c6">
  <path d="M9.500 7v86M103.500 7v86M161.500 7v86M230.500 7v86"/><path d="M1 84h8v8M1 84v9h9M5 88l5 5" stroke="#777"/>
  <path d="M241 93l4-4 4 4" stroke="#444"/>
  <ellipse cx="131" cy="24" rx="4.500" ry="6" fill="#f28a1c" stroke="none"/>
  <g transform="translate(22 11)"><use href="#edit"/></g><g transform="translate(195 24)"><use href="#baidu"/></g>
 </svg>
 <svg width="12" height="6" style="left:1737px;top:83px" fill="none" stroke="#444"><path d="M2 1l3 3 3-3"/></svg>
 <span class="t" style="left:1699px;top:72px;font-size:12.500px">查找</span><span class="t" style="left:1699px;top:94px;font-size:12.500px">替换</span><span class="t" style="left:1699px;top:117px;font-size:12.500px">选择</span>
 <span class="t" style="left:1680px;top:91px;font-size:9px;color:#2b579a;line-height:8px;white-space:normal;width:12px;font-weight:700">ab<br>ac</span>
 <span class="t lb" style="left:1703px">编辑</span><span class="t" style="left:1784px;top:105px">加</span><span class="t" style="left:1778px;top:119px">载项</span><span class="t lb" style="left:1772px">加载项</span>
 <span class="t" style="left:1836px;top:105px">保存到</span><span class="t" style="left:1830px;top:119px">百度网盘</span><span class="t lb" style="left:1842px">保存</span>
 <!-- info -->
 <div class="ibar" style="left:-1px;top:158px;width:1910px"></div>
 <svg width="24" height="24" style="left:8px;top:161px"><circle cx="12" cy="12" r="11" fill="#3d78b5"/><path d="M12 5v2M12 10v9" stroke="#fff" stroke-width="3"/></svg>
 <span class="t" style="left:39px;top:166px;font-weight:700;font-size:12.500px">获取正版 OFFICE</span>
 <span class="t" style="left:144px;top:166px;font-size:11.800px">你的许可证并非正版，你可能是盗版软件的受害者。立即通过正版 Office 避免中断并使文件保持安全。</span>
 <div class="btn" style="left:700px;top:161px;width:120px;height:23px">获取正版 Office</div><div class="btn" style="left:829px;top:161px;width:105px;height:23px">了解详细信息</div>
 <svg width="14" height="14" style="left:1896px;top:166px" fill="none" stroke="#555"><path d="M2 2l9 9M11 2l-9 9"/></svg>
 <!-- nav -->
 <div class="a" style="left:347px;top:188px;width:1px;height:830px;background:#bdbdbd"></div>
 <span class="t" style="left:12px;top:204px;font-size:21px;color:#333">导航</span>
 <svg width="60" height="14" style="left:277px;top:205px" fill="none" stroke="#555"><path d="M1 3l6 7 6-7M44 2l9 10M53 2l-9 10"/></svg>
 <div class="btn" style="left:13px;top:245px;width:317px;height:25px"></div>
 <span class="t" style="left:20px;top:251px;color:#777">在文档中搜索</span>
 <svg width="26" height="16" style="left:303px;top:250px" fill="none"><circle cx="9" cy="5" r="4" stroke="#2b72b9" stroke-width="1.800"/><path d="M6 8l-4 6" stroke="#2b579a" stroke-width="2"/><path d="M17 6l2.500 2.500L22 6" stroke="#555"/></svg>
 <span class="t" style="left:14px;top:290px;font-weight:700;color:#2b579a">标题</span><span class="t" style="left:62px;top:290px">页面</span><span class="t" style="left:111px;top:290px">结果</span>
 <div class="a" style="left:13px;top:309px;width:26px;height:3px;background:#2b579a"></div>
 <div class="a" style="left:28px;top:317px;width:289px;height:17px;background:#fff;border:1px solid #bbb;box-sizing:border-box"></div>
 <svg width="10" height="7" style="left:168px;top:322px"><path d="M0 1h8M4 2l4 4H0z" stroke="#444" fill="#444" stroke-width=".8"/></svg>
 <div class="a" style="left:45px;top:776px;width:272px;height:20px;background:#bdd3f2"></div>
 <div class="n" style="left:0;top:334px">
  <div style="padding-left:35px">1 投标函</div>
  <div style="padding-left:35px"><s>◢</s>2 分项报价</div>
  <div style="padding-left:50px">2.1 分项报价表</div><div style="padding-left:50px">2.2 备品备件分项报价表</div><div style="padding-left:50px">2.3 专用工具分项报价表</div><div style="padding-left:50px">2.4 技术服务和培训报价表</div><div style="padding-left:50px">2.5 货物说明一览表</div>
  <div style="padding-left:35px">3 技术偏离表</div>
  <div style="padding-left:35px"><s>◢</s>4 资格审查资料</div>
  <div style="padding-left:50px"><s>◢</s>4.1 技术否决项1</div>
  <div style="padding-left:66px"><s>◢</s>4.1.1 深圳市晶日光电系新能源科技有限公司</div>
  <div style="padding-left:82px">4.1.1.1 质量保证体系认证证书</div><div style="padding-left:82px">4.1.1.2 环境管理体系认证证书</div><div style="padding-left:82px">4.1.1.3 职业健康安全管理体系认证证书</div>
  <div style="padding-left:66px"><s>◢</s>4.1.2 江苏欧力特能源科技有限公司</div>
  <div style="padding-left:82px">4.1.2.1 质量保证体系认证证书</div><div style="padding-left:82px">4.1.2.2 环境管理体系认证证书</div><div style="padding-left:82px">4.1.2.3 职业健康安全管理体系认证证书</div>
  <div style="padding-left:50px"><s>◢</s>4.2 技术否决项2</div>
  <div style="padding-left:66px">4.2.1 太阳能电源</div><div style="padding-left:66px">4.2.2 管式胶体电池</div>
  <div style="padding-left:50px">4.3 技术否决项3</div>
  <div style="padding-left:50px"><s>◢</s>4.4 技术评分响应资料</div>
  <div style="padding-left:66px">4.4.1 技术规格书</div><div style="padding-left:66px">4.4.2 数据单</div>
  <div style="padding-left:66px"><s>◢</s>4.4.3 综合评价</div>
  <div style="padding-left:82px">4.4.3.1 技术规格书响应</div><div style="padding-left:82px">4.4.3.2 数据单响应</div><div style="padding-left:82px">4.4.3.3 提供各站设备配置详细清单</div><div style="padding-left:82px">4.4.3.4 光伏方阵系统功率及蓄电池组的容...</div><div style="padding-left:82px">4.4.3.5 蓄电池放电参数表</div><div style="padding-left:82px">4.4.3.6 与投标产品参数一致的产品技术样本</div>
 </div>
 <!-- h ruler -->
 <div class="a" style="left:349px;top:188px;width:26px;height:27px;background:#d9d9d9"></div><div class="a" style="left:352px;top:191px;width:21px;height:21px;background:#fff"></div>
 <svg width="8" height="8" style="left:360px;top:198px" fill="none" stroke="#444" stroke-width="1.500"><path d="M1 0v6h6"/></svg>
 <div class="a" style="left:743px;top:193px;width:793px;height:16px;background:#c6c6c6"></div>
 <div class="a" style="left:838px;top:193px;width:603px;height:16px;background:#fff"></div>
 <svg width="830" height="30" style="left:730px;top:188px" font-size="10" fill="#555" text-anchor="middle">
  <text x="23" y="17">6</text><text x="51" y="17">4</text><text x="79" y="17">2</text><text x="136" y="17">2</text><text x="164" y="17">4</text><text x="192" y="17">6</text><text x="220" y="17">8</text><text x="248" y="17">10</text><text x="276" y="17">12</text><text x="304" y="17">14</text><text x="332" y="17">16</text><text x="360" y="17">18</text><text x="388" y="17">20</text><text x="416" y="17">22</text><text x="444" y="17">24</text><text x="472" y="17">26</text><text x="500" y="17">28</text><text x="528" y="17">30</text><text x="556" y="17">32</text><text x="584" y="17">34</text><text x="612" y="17">36</text><text x="640" y="17">38</text><text x="668" y="17">40</text><text x="696" y="17">42</text><text x="724" y="17">44</text><text x="752" y="17">46</text><text x="780" y="17">48</text>
  <path d="M102 2h10l-5 7 5 7v6h-10v-6h10l-5-7-5-7z" fill="#fff" stroke="#888"/><path d="M706 22v-5l5-4 5 4v5z" fill="#fff" stroke="#888"/>
 </svg>
 <!-- v ruler -->
 <div class="a" style="left:354px;top:218px;width:18px;height:800px;background:#fff"></div><div class="a" style="left:354px;top:218px;width:18px;height:4px;background:#c6c6c6"></div>
 <div class="a" style="left:360px;top:237px;width:6px;height:781px;background:repeating-linear-gradient(180deg,#555 0 1px,transparent 1px 16px)"></div>
 <svg width="20" height="800" style="left:354px;top:218px" font-size="10" fill="#555" text-anchor="middle">
  <g><rect x="4" y="27" width="12" height="15" fill="#fff"/><text transform="translate(12 35)rotate(-90)">2</text><rect x="4" y="59" width="12" height="15" fill="#fff"/><text transform="translate(12 67)rotate(-90)">4</text><rect x="4" y="91" width="12" height="15" fill="#fff"/><text transform="translate(12 99)rotate(-90)">6</text><rect x="4" y="123" width="12" height="15" fill="#fff"/><text transform="translate(12 131)rotate(-90)">8</text><rect x="4" y="155" width="12" height="15" fill="#fff"/><text transform="translate(12 163)rotate(-90)">10</text><rect x="4" y="187" width="12" height="15" fill="#fff"/><text transform="translate(12 195)rotate(-90)">12</text><rect x="4" y="219" width="12" height="15" fill="#fff"/><text transform="translate(12 227)rotate(-90)">14</text><rect x="4" y="251" width="12" height="15" fill="#fff"/><text transform="translate(12 259)rotate(-90)">16</text><rect x="4" y="283" width="12" height="15" fill="#fff"/><text transform="translate(12 291)rotate(-90)">18</text><rect x="4" y="315" width="12" height="15" fill="#fff"/><text transform="translate(12 323)rotate(-90)">20</text><rect x="4" y="347" width="12" height="15" fill="#fff"/><text transform="translate(12 355)rotate(-90)">22</text><rect x="4" y="379" width="12" height="15" fill="#fff"/><text transform="translate(12 387)rotate(-90)">24</text><rect x="4" y="411" width="12" height="15" fill="#fff"/><text transform="translate(12 419)rotate(-90)">26</text><rect x="4" y="443" width="12" height="15" fill="#fff"/><text transform="translate(12 451)rotate(-90)">28</text><rect x="4" y="475" width="12" height="15" fill="#fff"/><text transform="translate(12 483)rotate(-90)">30</text><rect x="4" y="507" width="12" height="15" fill="#fff"/><text transform="translate(12 515)rotate(-90)">32</text><rect x="4" y="539" width="12" height="15" fill="#fff"/><text transform="translate(12 547)rotate(-90)">34</text><rect x="4" y="571" width="12" height="15" fill="#fff"/><text transform="translate(12 579)rotate(-90)">36</text><rect x="4" y="603" width="12" height="15" fill="#fff"/><text transform="translate(12 611)rotate(-90)">38</text><rect x="4" y="635" width="12" height="15" fill="#fff"/><text transform="translate(12 643)rotate(-90)">40</text><rect x="4" y="667" width="12" height="15" fill="#fff"/><text transform="translate(12 675)rotate(-90)">42</text><rect x="4" y="699" width="12" height="15" fill="#fff"/><text transform="translate(12 707)rotate(-90)">44</text><rect x="4" y="731" width="12" height="15" fill="#fff"/><text transform="translate(12 739)rotate(-90)">46</text><rect x="4" y="763" width="12" height="15" fill="#fff"/><text transform="translate(12 771)rotate(-90)">48</text></g>
 </svg>
 <!-- page -->
 <div class="a" style="left:744px;top:218px;width:792px;height:800px;background:#fff;border-left:1px solid #c6c6c6;border-right:1px solid #c6c6c6;box-sizing:border-box"></div>
 <svg width="800" height="800" style="left:744px;top:218px" fill="none">
  <path d="M71 2.500h24M95.500 0v3M700.500 0v3M700 2.500h23" stroke="#aaa"/>
  <rect x="95" y="42" width="565" height="3" fill="url(#gtop)"/>
  <path d="M697.500 42V492" stroke="#a9b3bf" stroke-width="1.500"/>
  <path d="M96 70V500" stroke="#dde3ea"/><path d="M96 490V800" stroke="#b7c4d2" stroke-width="1.500"/>
  <defs><linearGradient id="gtop"><stop offset="0" stop-color="#bcc5cf"/><stop offset="1" stop-color="#f6f7f8"/></linearGradient></defs>
  <rect x="89" y="24" width="3" height="3" fill="#000"/>
 </svg>
 <span class="t" style="left:839px;top:225px;font-size:20px;color:#222;font-family:'Liberation Serif','Noto Serif CJK SC',serif">4. 3&nbsp;&nbsp;&nbsp;&nbsp;&nbsp;技术否决项3<span style="color:#999;font-size:12px;font-family:'DejaVu Sans'">↵</span></span>
 <div class="a" style="left:1081px;top:326px;width:145px;height:30px;border:3.500px solid #c8102e;box-sizing:border-box"></div>
 <span class="t" style="left:1085px;top:335px;font-size:15.700px;color:#222;font-family:'Noto Serif CJK SC',serif">制造商授权书</span>
 <!-- scanned body -->
 <div class="sc" style="left:943px;top:396.500px;width:259px">致：<u>中国石油管道局工程有限公司第一分公司</u>（招标人）</div>
 <div class="sc" style="left:944px;top:438px;width:397px">我单位<u>江苏欧力特能源科技有限公司</u>（制造商名称）是按<u>中国/高邮市</u>（国家 / 地区名</div>
 <div class="sc" style="left:922px;top:466px;width:418px">称）法律成立的一家制造商，主要营业地点设在<u>&nbsp;江苏高邮市经济开发区波司登大道88号&nbsp;</u></div>
 <div class="sc" style="left:924px;top:493px;width:416px">（制造商地址）。兹授权按<u>中国/濮阳市</u>（国家 / 地区名称）的法律正式成立的，主要营业</div>
 <div class="sc" style="left:924px;top:521px;width:418px">地点设在<u>濮阳市华龙区京开道与黄河路交叉口南30米路东191号</u>（投标人的单位地址）的 濮</div>
 <div class="sc" style="left:924px;top:548px;width:418px"><u>阳市中鹏工业电器有限责任公司</u>（投标人名称）以我单位制造的 <u>&nbsp;管式胶体蓄电池&nbsp;</u>（设备</div>
 <div class="sc" style="left:925px;top:576px;width:418px">名称）进行<u>锦州-大有能源基地-盘锦输油工程太阳能电源</u>（项目名称）投标活动。我单位对</div>
 <div class="sc" style="left:925px;top:603px;width:419px">投标文件中技术部分、交货期及技术服务均已确认，同意按照合同约定供货，并对产品质量</div>
 <div class="sc" style="left:925px;top:630px;width:60px;text-align-last:left">承担责任。</div>
 <div class="sc" style="left:947px;top:685.500px;width:306px">授权期限：<u>&nbsp;2025&nbsp;</u>年<u>&nbsp;&nbsp;7&nbsp;&nbsp;</u>月<u>&nbsp;&nbsp;23&nbsp;&nbsp;</u>日起至本项目质保期结束时止。</div>
 <div class="sc" style="left:948px;top:756px;width:291px">投标人名称：<u>&nbsp;濮阳市中鹏工业电器有限责任公司&nbsp;</u>（单位盖章）</div>
 <div class="sc" style="left:949px;top:896.500px;width:281px">制造商名称：<u>&nbsp;江苏欧力特能源科技有限公司&nbsp;&nbsp;</u>（单位盖章）</div>
 <svg width="130" height="130" style="left:1082px;top:842px" fill="none">
  <circle cx="65" cy="65" r="57.500" stroke="#e0303f" stroke-width="2.500"/>
  <path id="arc1" d="M27 97A49 49 0 1 1 103 97"/><path id="arc2" d="M22 84A53 53 0 0 0 108 84"/>
  <text font-size="15" fill="#e0303f" letter-spacing="2.300" style="font-family:'Noto Serif CJK SC',serif"><textPath href="#arc1">江苏欧力特能源科技有限公司</textPath></text>
  <text font-size="6" fill="#e0303f" font-weight="700" letter-spacing=".8"><textPath href="#arc2">321084092443</textPath></text>
  <path d="M65 44l5 14.500h15l-12 9 4.500 14.500L65 73l-12.500 9 4.500-14.500-12-9h15z" fill="#e51c2c"/>
 </svg>
 <!-- status -->
 <div class="a" style="left:-1px;top:1018px;width:1910px;height:21px;background:#f3f3f3;border-top:1px solid #c6c6c6;box-sizing:border-box"></div>
 <span class="t" style="left:11px;top:1022px">第 34 页，共 242 页</span><span class="t" style="left:141px;top:1022px">41136 个字</span><span class="t" style="left:255px;top:1022px">简体中文(中国大陆)</span><span class="t" style="left:377px;top:1022px">修订: 关闭</span><span class="t" style="left:469px;top:1022px;font-weight:700">辅助功能: 调查</span>
 <svg width="20" height="14" style="left:233px;top:1021px" fill="none" stroke="#555"><path d="M2 1h6v11H2zM8 1h2M12 3l5 6M17 3l-5 6"/></svg>
 <svg width="16" height="14" style="left:450px;top:1021px" fill="none" stroke="#555"><path d="M7 2a5 5 0 1 0 5 6M8 5l4 7M5 7h6"/></svg>
 <div class="a" style="left:1654px;top:1019px;width:40px;height:20px;background:#c6c6c6"></div>
 <svg width="270" height="22" style="left:1624px;top:1018px" fill="none" stroke="#555">
  <path d="M2 4h8v13H2zM10 4h8v13h-8zM4 8h4M4 11h4M12 8h4M12 11h4"/><path d="M43 3.500h14v14H43zM46 7h8M46 10h8M46 13h8"/><path d="M85 3h10v12H85zM88 7h5M88 10h5"/><circle cx="96" cy="14" r="4" fill="#777"/>
  <path d="M116 10.500h8M130 10.500h100M234 10.500h8M238 6.500v8"/><rect x="177" y="5" width="4" height="11" fill="#444" stroke="none"/>
 </svg>
 <span class="t" style="left:1880px;top:1022px">100%</span>
</div></div>

<!-- ============ NOTEPAD ============ -->
<div class="a" style="left:1437px;top:0;width:5px;height:1033px;background:linear-gradient(90deg,#7e7e7e,#b5b5b5)"></div>
<div class="a" style="left:1442px;top:0;width:470px;height:1033px;background:#fff;overflow:hidden">
 <div class="a" style="left:0;top:0;width:470px;height:39px;background:#fff"></div>
 <div class="a" style="left:0;top:38px;width:470px;height:1px;background:#efefef"></div>
 <svg width="20" height="14" style="left:8px;top:0"><rect x="2" y="-3" width="13" height="14" fill="#cfe0f2" stroke="#7f9bbd"/><path d="M5 1h7M5 4h7M5 7h7" stroke="#7f9bbd"/></svg>
 <span class="t" style="left:30px;top:0;color:#8a8a8a;font-size:12px">*无标题 - 记事本</span>
 <svg width="120" height="12" style="left:350px;top:0" fill="none" stroke="#888"><path d="M1 4.500h10M46 0v8.500h9V0M92 0l9 9M101 0l-9 9"/></svg>
 <span class="t" style="left:7px;top:24px;color:#777;font-size:12px">文件(F)</span><span class="t" style="left:59px;top:24px;color:#777;font-size:12px">编辑(E)</span><span class="t" style="left:112px;top:24px;color:#777;font-size:12px">格式(O)</span><span class="t" style="left:168px;top:24px;color:#777;font-size:12px">查看(V)</span><span class="t" style="left:222px;top:24px;color:#777;font-size:12px">帮助(H)</span>
 <div class="a" style="left:3px;top:41.500px;font-size:16px;line-height:21px;color:#111;white-space:pre;font-family:'Liberation Sans','Noto Sans CJK SC',sans-serif">锦州-大有能源基地-盘锦输油工程太阳能电源

招标编号：2025-CPPPC-ZBWT-SPS-074

招 标 人：中国石油管道局工程有限公司第一分公司

招标代理机构：中油管道物资装备有限公司

2025 年 07 月

<span style="display:inline-block;width:80px">1</span>太阳能电源

交货地点：辽宁省锦州市买方指定地点；

交货期：投标人自行提供最短交货期，技术资料确认完毕并下
发排产通知单后XX日历日交货到买方指定地点，但不得超过60
天。

投标有效期  自投标截止之日起90日历日。

投标保证金金额:人民币7 万元整


投标设备制造商名称
深圳市晶日光电新能源科技有限公司
江苏欧力特能源科技有限公司



<span style="background:#0078d7;color:#fff">濮阳市中鹏工业电器有限责任公司</span>
<span style="display:inline-block;width:45px">2025</span><span style="display:inline-block;width:36px">年</span><span style="display:inline-block;width:38px">07</span><span style="display:inline-block;width:42px">月</span><span style="display:inline-block;width:38px">24</span>日


王红玉  410901197804170536

于红伟 23212619840203364X</div>
 <div class="a" style="left:454px;top:39px;width:16px;height:977px;background:#f0f0f0"></div>
 <svg width="12" height="8" style="left:456px;top:46px" fill="none" stroke="#bbb" stroke-width="1.500"><path d="M1 6l5-4 5 4"/></svg>
 <svg width="12" height="8" style="left:456px;top:1004px" fill="none" stroke="#bbb" stroke-width="1.500"><path d="M1 2l5 4 5-4"/></svg>
 <div class="a" style="left:0;top:1016px;width:470px;height:17px;background:#f0f0f0;border-top:1px solid #d4d4d4;box-sizing:border-box"></div>
 <svg width="470" height="12" style="left:0;top:1017px"><path d="M39.500 0v12M180.500 0v12M230.500 0v12M350.500 0v12" stroke="#d4d4d4"/></svg>
 <span class="t" style="left:52px;top:1021px">第 26 行，第 1 列</span><span class="t" style="left:189px;top:1021px">100%</span><span class="t" style="left:238px;top:1021px">Windows (CRLF)</span><span class="t" style="left:359px;top:1021px">UTF-8</span>
</div>

<!-- taskbar -->
<div class="a" style="left:0;top:1026px;width:3835px;height:7px;background:linear-gradient(90deg,#1d2a33,#222e36 50%,#1c2b34)"></div>
<div class="a" style="left:789px;top:1026px;width:48px;height:7px;background:#5a6770"></div>
<div class="a" style="left:2709px;top:1026px;width:48px;height:7px;background:#5a6770"></div>
</body></html>
